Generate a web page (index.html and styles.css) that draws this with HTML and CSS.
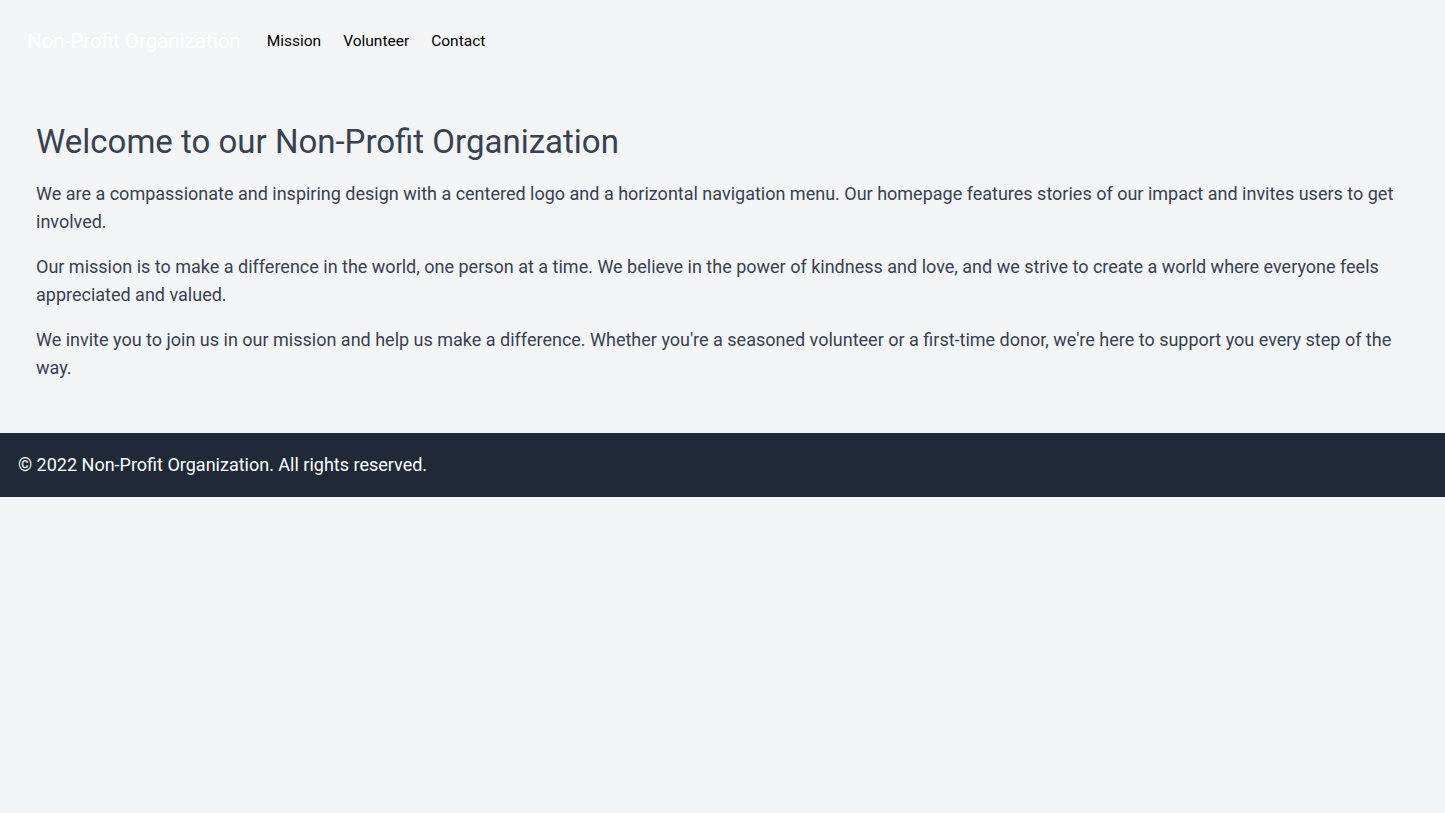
FILE: index.html
```html
<!DOCTYPE html>
<html lang="en">
<head>
<meta charset="utf-8">
<title>Non-Profit Organization</title>
<link rel="stylesheet" href="styles.css">
</head>
<body>
<header class="site-header">
  <a class="logo" href="#">Non-Profit Organization</a>
  <nav class="nav">
    <a href="#">Mission</a>
    <a href="#">Volunteer</a>
    <a href="#">Contact</a>
  </nav>
</header>
<main class="content">
  <h1 class="title">Welcome to our Non-Profit Organization</h1>
  <p>We are a compassionate and inspiring design with a centered logo and a horizontal navigation menu. Our homepage features stories of our impact and invites users to get involved.</p>
  <p>Our mission is to make a difference in the world, one person at a time. We believe in the power of kindness and love, and we strive to create a world where everyone feels appreciated and valued.</p>
  <p>We invite you to join us in our mission and help us make a difference. Whether you're a seasoned volunteer or a first-time donor, we're here to support you every step of the way.</p>
</main>
<footer class="site-footer">
  <p>&copy; 2022 Non-Profit Organization. All rights reserved.</p>
</footer>
</body>
</html>
```
FILE: styles.css
```css
html, body {
  margin: 0;
  padding: 0;
}
body {
  background: #f3f4f6;
  color: #374151;
  font-family: Roboto, "Noto Sans", sans-serif;
}
a { text-decoration: none; }
.site-header {
  display: flex;
  align-items: center;
  padding: 27px 27px;
  gap: 26px;
}
.logo {
  color: #ffffff;
  font-size: 20.5px;
  line-height: 28px;
}
.nav {
  display: flex;
  gap: 22px;
}
.nav a {
  color: #000000;
  font-size: 15.5px;
  line-height: 20px;
}
.content {
  padding: 42px 36px 34px;
}
.title {
  margin: 0 0 20px;
  font-size: 33px;
  line-height: 36px;
  font-weight: 400;
}
.content p {
  margin: 0 0 17px;
  font-size: 18px;
  line-height: 28px;
}
.site-footer {
  background: #1f2937;
  color: #ffffff;
  padding: 18px;
}
.site-footer p {
  margin: 0;
  font-size: 18px;
  line-height: 28px;
}
```
